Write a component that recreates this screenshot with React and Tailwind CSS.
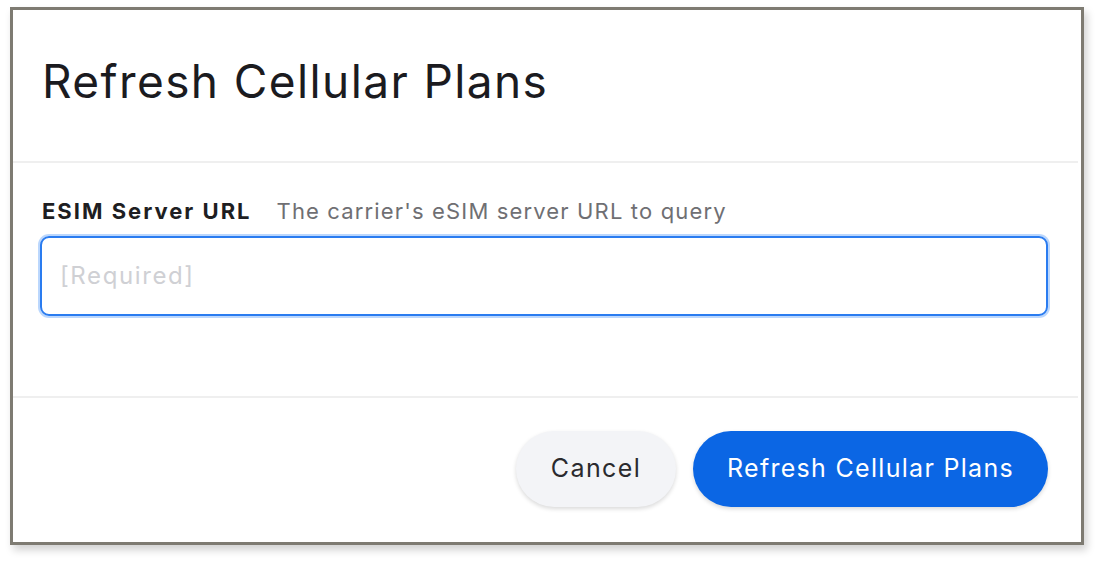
export default function App() {
  const font = { fontFamily: 'Inter, "Noto Sans", sans-serif' };
  return (
    <div className="w-[1100px] h-[563px] bg-white overflow-hidden" style={font}>
      <div className="ml-[10px] mt-[7px] w-[1074px] h-[538px] border-[3px] border-[#7e7b72] bg-white flex flex-col shadow-[3px_5px_8px_rgba(0,0,0,0.18)]">
        <div className="h-[151px] flex items-center pl-[29px] pb-[10px]">
          <h1 className="text-[46px] leading-none text-[#1b1b1f] tracking-[1.4px]">Refresh Cellular Plans</h1>
        </div>
        <div className="h-[2px] bg-[#efefef] mr-[3px]" />
        <div className="h-[233px] px-[27px] pt-[34px]">
          <div className="flex items-baseline gap-[25px] pl-[2px] leading-[28px]">
            <span className="text-[22px] font-bold text-[#1e1e22] tracking-[2px]">ESIM Server URL</span>
            <span className="text-[22px] text-[#6f6f73] tracking-[1.15px]">The carrier's eSIM server URL to query</span>
          </div>
          <div className="mt-[11px] h-[80px] w-[1008px] rounded-[9px] border-2 border-[#2a7cf0] shadow-[0_0_0_2px_rgba(60,140,250,0.35)] flex items-center pl-[18px]">
            <span className="text-[24px] text-[#cfd0d4] tracking-[1.6px]">[Required]</span>
          </div>
        </div>
        <div className="h-[2px] bg-[#efefef] mr-[3px]" />
        <div className="flex-1 flex items-center justify-end gap-[17px] pr-[33px] pb-[2px]">
          <div className="w-[160px] h-[76px] rounded-full bg-[#f3f4f7] shadow-[0_2px_4px_rgba(0,0,0,0.15)] flex items-center justify-center">
            <span className="text-[25px] text-[#2a2a2e] tracking-[1.4px]">Cancel</span>
          </div>
          <div className="w-[355px] h-[76px] rounded-full bg-[#0b66e4] shadow-[0_2px_4px_rgba(0,0,0,0.15)] flex items-center justify-center">
            <span className="text-[25px] text-white tracking-[1.3px]">Refresh Cellular Plans</span>
          </div>
        </div>
      </div>
    </div>
  );
}
